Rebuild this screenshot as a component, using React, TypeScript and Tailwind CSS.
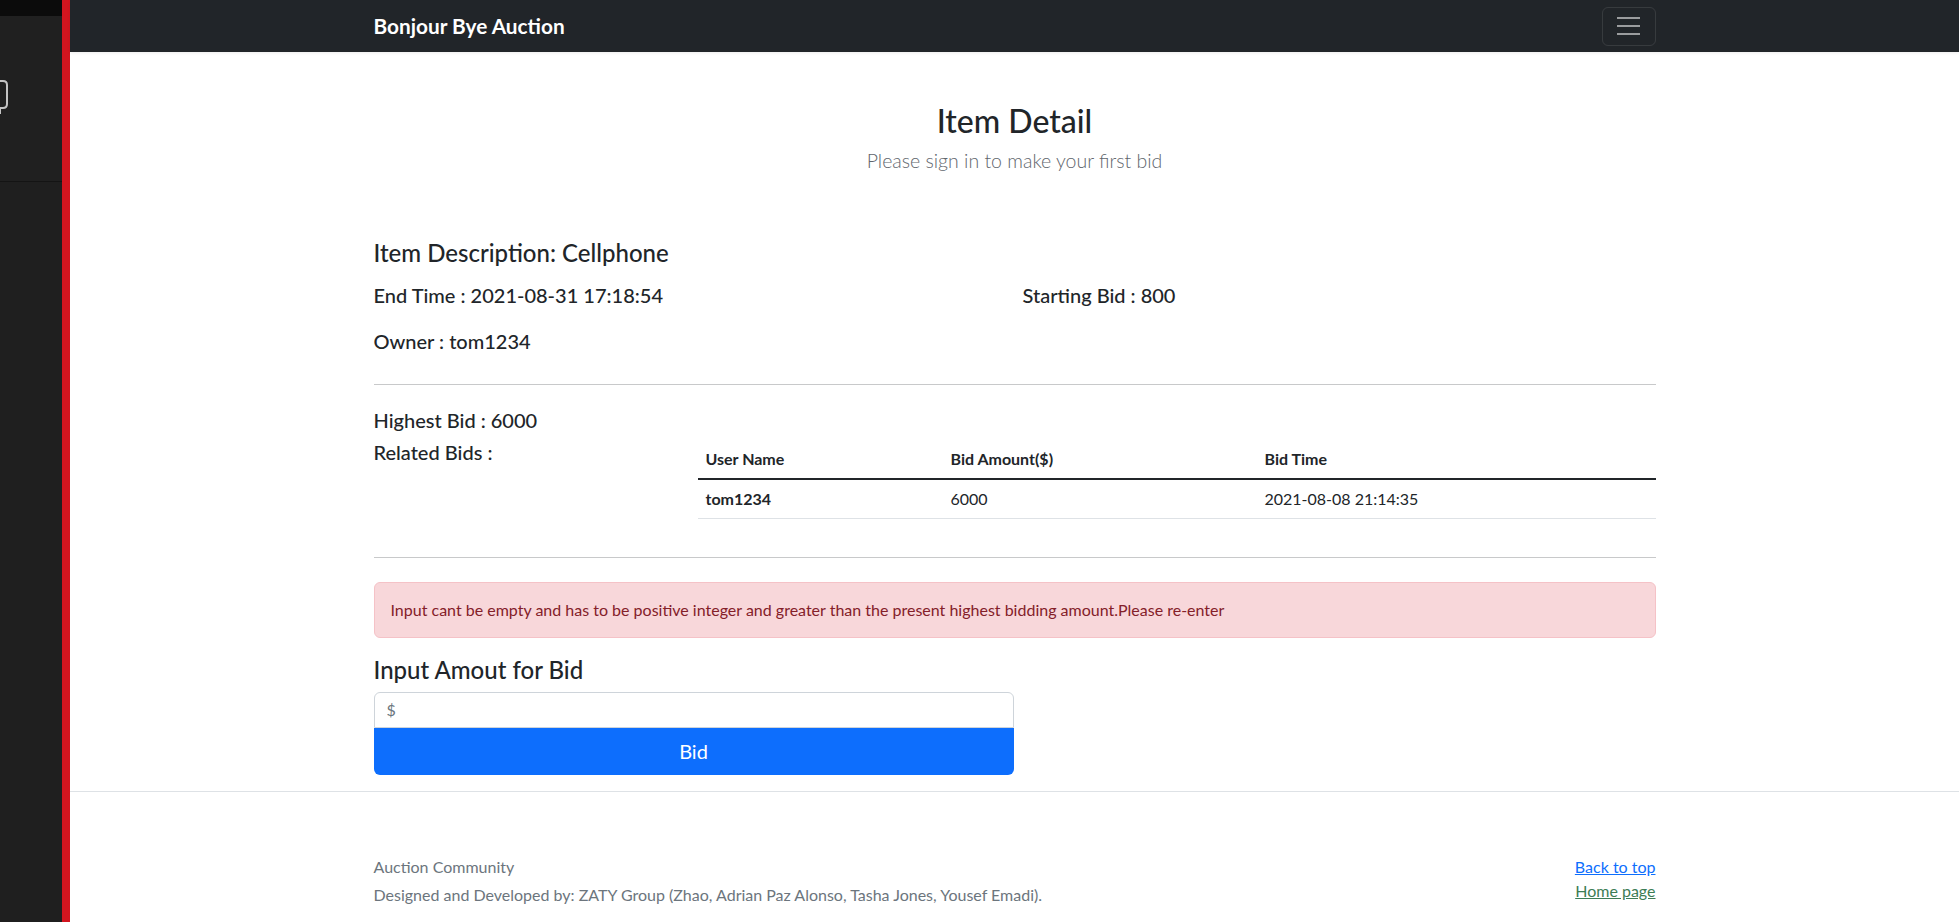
import React from 'react';

const bids = [{ user: 'tom1234', amount: '6000', time: '2021-08-08 21:14:35' }];

function SidePanel() {
  return (
    <aside className="w-[62px] shrink-0 bg-[#1f1f1f] flex flex-col">
      <div className="h-[16px] bg-[#0b0b0b]" />
      <div className="h-[166px] bg-[#202020] border-b border-[#141414] relative overflow-hidden">
        <svg className="absolute left-0 top-[64px]" width="10" height="36" viewBox="0 0 10 36" fill="none">
          <path d="M-10 1 H3 Q7 1 7 5 V24 Q7 28 3 28 H0 V34" stroke="#c4c4c4" strokeWidth="2" />
        </svg>
      </div>
      <div className="flex-1" />
    </aside>
  );
}

function Navbar() {
  return (
    <nav className="h-[52px] bg-[#212529] shadow-[0_1px_3px_rgba(0,0,0,0.08)]">
      <div className="w-[1282px] h-full mx-auto flex items-center justify-between">
        <span className="text-white text-[20.8px] font-bold leading-none">Bonjour Bye Auction</span>
        <button className="w-[54px] h-[39px] rounded-[6px] border border-[rgba(255,255,255,0.1)] flex flex-col items-center justify-center gap-[6px]">
          <span className="block w-[23px] h-[2px] bg-[#9a9c9e]" />
          <span className="block w-[23px] h-[2px] bg-[#9a9c9e]" />
          <span className="block w-[23px] h-[2px] bg-[#9a9c9e]" />
        </button>
      </div>
    </nav>
  );
}

export default function App() {
  return (
    <div className="flex w-full min-h-[922px] text-[#212529]" style={{ fontFamily: 'Lato, "Open Sans", sans-serif' }}>
      <SidePanel />
      <div className="w-[8px] shrink-0 bg-[#d2151f]" />
      <div className="flex-1 flex flex-col bg-white">
        <Navbar />

        <main className="w-[1282px] mx-auto">
          <h2 className="mt-[50px] text-center text-[32px] font-medium leading-[1.2]">Item Detail</h2>
          <p className="mt-[6px] text-center text-[19.5px] font-light leading-[30px] text-[#5f666d]">
            Please sign in to make your first bid
          </p>

          <h4 className="mt-[63px] text-[24px] font-medium leading-[1.2]">Item Description: Cellphone</h4>
          <div className="mt-[15px] grid grid-cols-[649px_1fr]">
            <h5 className="text-[20px] font-medium leading-[24px]">End Time : 2021-08-31 17:18:54</h5>
            <h5 className="text-[20px] font-medium leading-[24px]">Starting Bid : 800</h5>
          </div>
          <h5 className="mt-[22px] text-[20px] font-medium leading-[24px]">Owner : tom1234</h5>

          <hr className="mt-[31px] border-t border-[#c8c9ca]" />

          <h5 className="mt-[23px] text-[20px] font-medium leading-[24px]">Highest Bid : 6000</h5>
          <div className="mt-[8px] flex">
            <h5 className="w-[324px] shrink-0 text-[20px] font-medium leading-[24px]">Related Bids :</h5>
            <table className="flex-1 text-[16px] leading-[24px] border-collapse">
              <thead>
                <tr className="border-b-2 border-[#212529]">
                  <th className="w-[245px] px-2 py-[7px] text-left font-bold">User Name</th>
                  <th className="w-[314px] px-2 py-[7px] text-left font-bold">Bid Amount($)</th>
                  <th className="px-2 py-[7px] text-left font-bold">Bid Time</th>
                </tr>
              </thead>
              <tbody>
                {bids.map((b) => (
                  <tr key={b.user} className="border-b border-[#dee2e6]">
                    <td className="px-2 py-[7px] font-bold">{b.user}</td>
                    <td className="px-2 py-[7px]">{b.amount}</td>
                    <td className="px-2 py-[7px]">{b.time}</td>
                  </tr>
                ))}
              </tbody>
            </table>
          </div>

          <hr className="mt-[38px] border-t border-[#c8c9ca]" />

          <div className="mt-[24px] h-[56px] px-4 flex items-center rounded-[6px] border border-[#f5c2c7] bg-[#f8d7da] text-[#842029] text-[16px]">
            Input cant be empty and has to be positive integer and greater than the present highest bidding amount.Please re-enter
          </div>

          <h4 className="mt-[18px] text-[24px] font-medium leading-[1.2]">Input Amout for Bid</h4>
          <div className="mt-[7px] w-[640px] flex flex-col">
            <input
              type="text"
              placeholder="$"
              className="h-[36px] px-3 rounded-t-[6px] border border-[#ced4da] text-[16px] placeholder:text-[#6c757d] outline-none"
            />
            <button className="h-[47px] rounded-b-[6px] bg-[#0d6efd] text-white text-[20px]">Bid</button>
          </div>
        </main>

        <footer className="mt-[16px] border-t border-[#dee2e6] flex-1">
          <div className="w-[1282px] mx-auto pt-[63px] flex justify-between text-[16px] leading-[24px]">
            <div className="text-[#6c757d]">
              <p>Auction Community</p>
              <p className="mt-[4px]">Designed and Developed by: ZATY Group (Zhao, Adrian Paz Alonso, Tasha Jones, Yousef Emadi).</p>
            </div>
            <div className="flex flex-col items-end">
              <a href="#" className="text-[#0d6efd] underline">Back to top</a>
              <a href="#" className="text-[#3d7d55] underline">Home page</a>
            </div>
          </div>
        </footer>
      </div>
    </div>
  );
}
